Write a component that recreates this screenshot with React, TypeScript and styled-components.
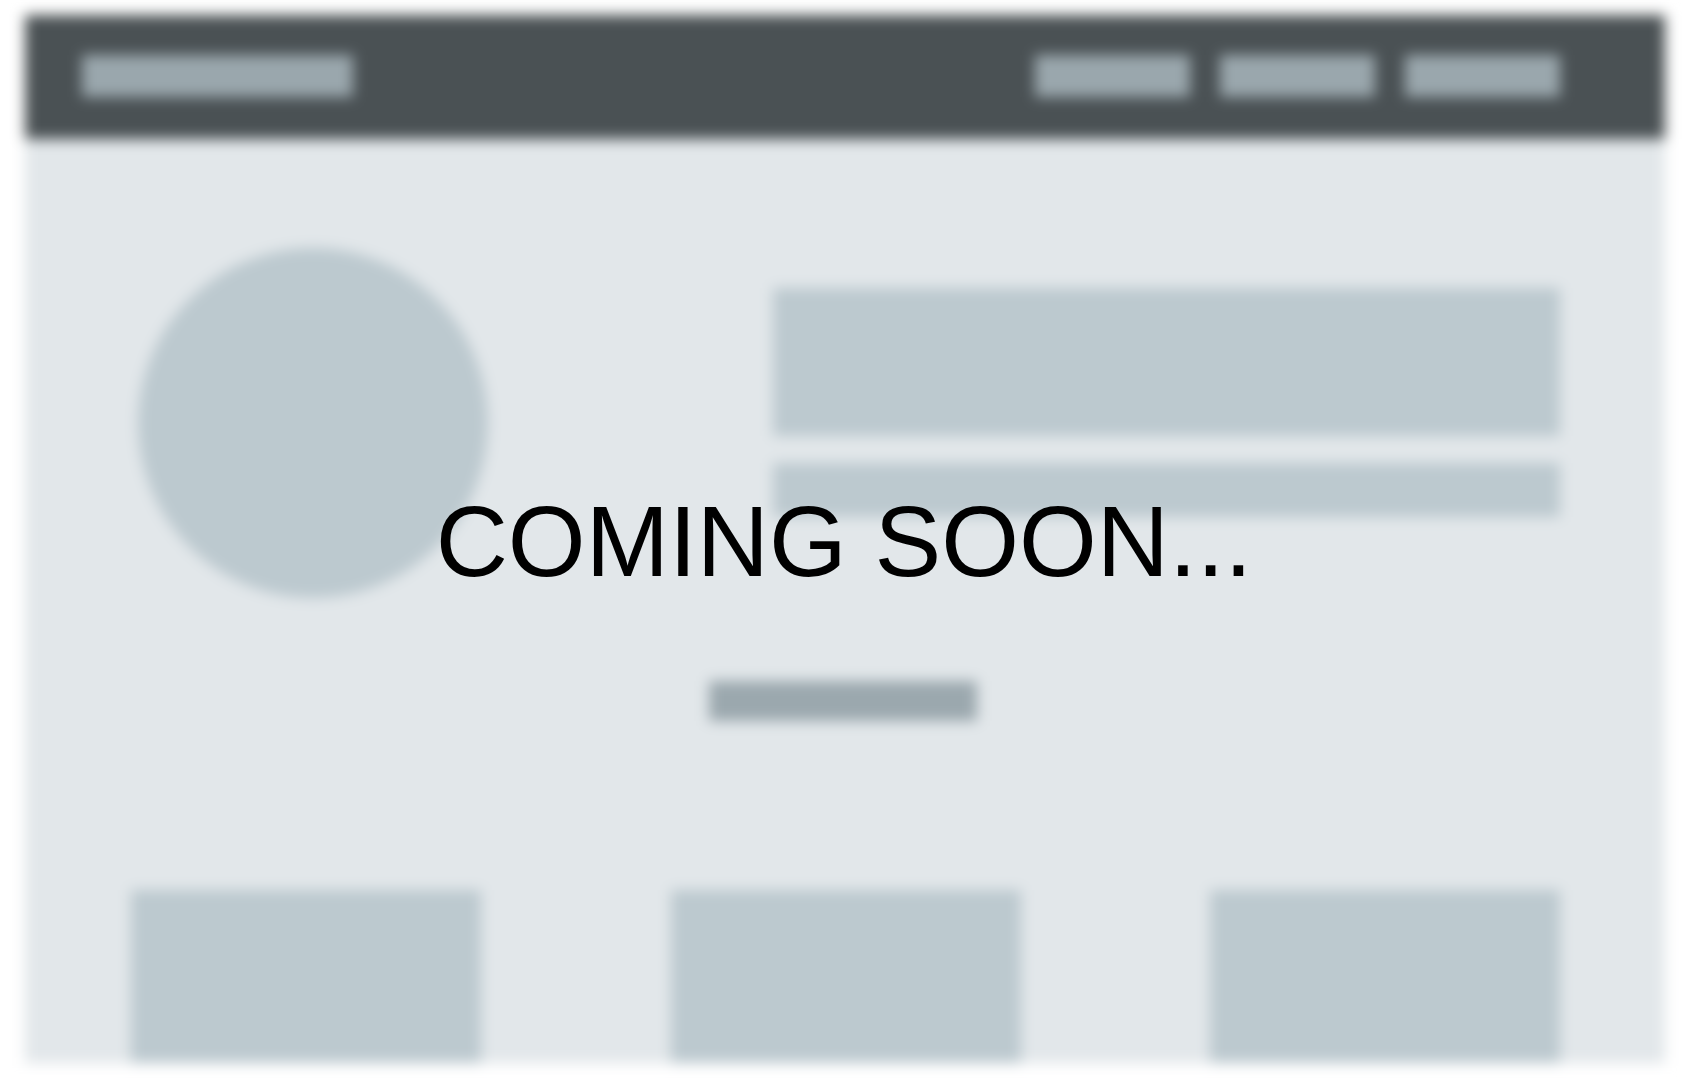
import React from "react";
import styled, { createGlobalStyle } from "styled-components";

const GlobalStyle = createGlobalStyle`
  html, body {
    margin: 0;
    padding: 0;
    background: #ffffff;
    overflow: hidden;
  }
  #root {
    min-height: 100vh;
  }
`;

const Backdrop = styled.div`
  position: fixed;
  inset: 0;
  background: #ffffff;
  filter: blur(7px);
  display: flex;
  z-index: 0;
`;

const Frame = styled.div`
  flex: 1;
  margin: 15px 23px 17px 25px;
  background: #e2e7ea;
  display: flex;
  flex-direction: column;
  overflow: hidden;
`;

const Header = styled.div`
  height: 124px;
  flex: none;
  background: #4a5154;
  display: flex;
  align-items: flex-start;
  padding: 40px 105px 0 57px;
  box-sizing: border-box;
  gap: 30px;
`;

const Bar = styled.div<{ $w: number }>`
  width: ${(p) => p.$w}px;
  height: 42px;
  background: #9aa7ad;
  flex: none;
`;

const Spacer = styled.div`
  flex: 1;
`;

const Body = styled.div`
  flex: 1;
  display: flex;
  flex-direction: column;
  padding: 109px 105px 0 113px;
`;

const Hero = styled.div`
  display: flex;
  align-items: flex-start;
  justify-content: space-between;
`;

const Avatar = styled.div`
  width: 350px;
  height: 350px;
  border-radius: 50%;
  background: #bcc9cf;
  flex: none;
`;

const HeroText = styled.div`
  width: 787px;
  margin-top: 40px;
  display: flex;
  flex-direction: column;
  gap: 27px;
`;

const Block = styled.div<{ $h: number }>`
  height: ${(p) => p.$h}px;
  background: #bcc9cf;
`;

const Button = styled.div`
  align-self: center;
  width: 268px;
  height: 40px;
  margin: 83px 0 0 -12px;
  background: #9ba8ae;
`;

const Cards = styled.div`
  margin: 169px 0 0 -7px;
  display: flex;
  justify-content: space-between;
  flex: 1;
`;

const Card = styled.div`
  width: 350px;
  background: #bcc9cf;
`;

const Stage = styled.main`
  position: relative;
  z-index: 1;
  min-height: 100vh;
  display: flex;
  align-items: center;
  justify-content: center;
`;

const Title = styled.h1`
  margin: 0;
  padding-top: 2px;
  font-family: "Liberation Sans", Arial, sans-serif;
  font-weight: 400;
  font-size: 100px;
  line-height: 1;
  color: #000000;
  text-align: center;
`;

export default function App() {
  return (
    <>
      <GlobalStyle />
      <Backdrop aria-hidden>
        <Frame>
          <Header>
            <Bar $w={271} />
            <Spacer />
            <Bar $w={155} />
            <Bar $w={155} />
            <Bar $w={155} />
          </Header>
          <Body>
            <Hero>
              <Avatar />
              <HeroText>
                <Block $h={148} />
                <Block $h={54} />
              </HeroText>
            </Hero>
            <Button />
            <Cards>
              <Card />
              <Card />
              <Card />
            </Cards>
          </Body>
        </Frame>
      </Backdrop>
      <Stage>
        <Title>COMING SOON...</Title>
      </Stage>
    </>
  );
}
